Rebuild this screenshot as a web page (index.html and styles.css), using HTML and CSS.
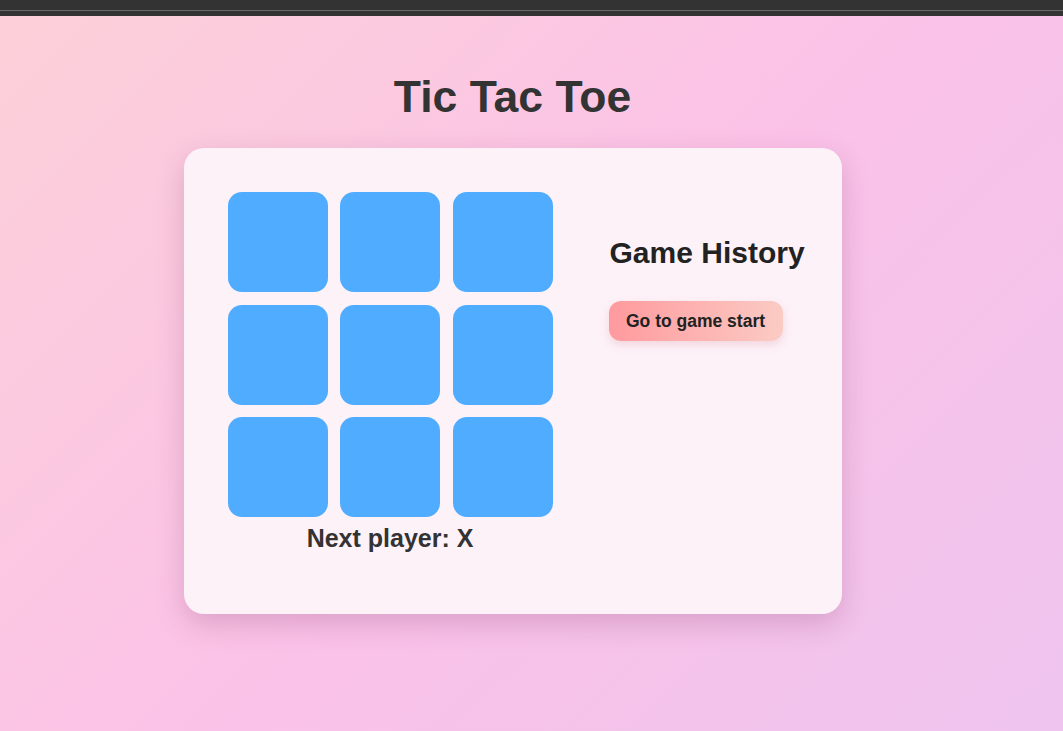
FILE: index.html
```html
<!DOCTYPE html>
<html>
<head>
<meta charset="utf-8">
<link rel="stylesheet" href="styles.css">
</head>
<body>
<div class="topbar"><div class="topbar-line"></div></div>
<main class="page">
  <h1 class="title">Tic Tac Toe</h1>
  <section class="card">
    <div class="game">
      <div class="board">
        <button class="square"></button>
        <button class="square"></button>
        <button class="square"></button>
        <button class="square"></button>
        <button class="square"></button>
        <button class="square"></button>
        <button class="square"></button>
        <button class="square"></button>
        <button class="square"></button>
      </div>
      <div class="status">Next player: X</div>
    </div>
    <div class="history">
      <h2 class="history-title">Game History</h2>
      <button class="jump">Go to game start</button>
    </div>
  </section>
</main>
</body>
</html>
```

FILE: styles.css
```css
html, body {
  margin: 0;
  padding: 0;
  height: 100%;
}
body {
  font-family: "Liberation Sans", Arial, sans-serif;
  background: linear-gradient(135deg, #fcd0d8 0%, #fbc2e8 52%, #eec4ee 100%);
  min-height: 731px;
  color: #333;
}
.topbar {
  height: 16px;
  background: #333333;
  display: flex;
  flex-direction: column;
  padding-top: 10px;
  box-sizing: border-box;
}
.topbar-line {
  height: 1px;
  background: #6a6a6a;
}
.page {
  display: flex;
  flex-direction: column;
  align-items: center;
  padding-right: 38px;
}
.title {
  margin: 56px 0 0 0;
  font-size: 44.5px;
  line-height: 50px;
  font-weight: bold;
  color: #333;
}
.card {
  margin-top: 26px;
  width: 658px;
  height: 466px;
  box-sizing: border-box;
  background: #fdf2f8;
  border-radius: 20px;
  box-shadow: 0 10px 28px rgba(120, 40, 90, 0.22);
  padding: 44px 44px;
  display: flex;
  gap: 56px;
}
.game {
  display: flex;
  flex-direction: column;
  align-items: center;
  flex-shrink: 0;
}
.board {
  display: grid;
  grid-template-columns: repeat(3, 100px);
  grid-template-rows: repeat(3, 100px);
  column-gap: 12.5px;
  row-gap: 12.5px;
}
.square {
  border: none;
  padding: 0;
  background: #4facfe;
  border-radius: 14px;
}
.status {
  margin-top: 6px;
  font-size: 25px;
  line-height: 30px;
  font-weight: bold;
  color: #333;
}
.history {
  display: flex;
  flex-direction: column;
  align-items: flex-start;
  padding-top: 44px;
}
.history-title {
  margin: 0 0 0 1px;
  font-size: 30px;
  line-height: 34px;
  font-weight: bold;
  color: #222;
  white-space: nowrap;
}
.jump {
  margin-top: 31px;
  height: 40px;
  width: 174px;
  border: none;
  border-radius: 12px;
  background: linear-gradient(90deg, #ff9a9e 0%, #fbcbc4 100%);
  box-shadow: 0 4px 10px rgba(200, 100, 120, 0.2);
  font-family: "Liberation Sans", Arial, sans-serif;
  font-size: 17.5px;
  font-weight: bold;
  color: #222;
  padding: 0;
  white-space: nowrap;
}
```
